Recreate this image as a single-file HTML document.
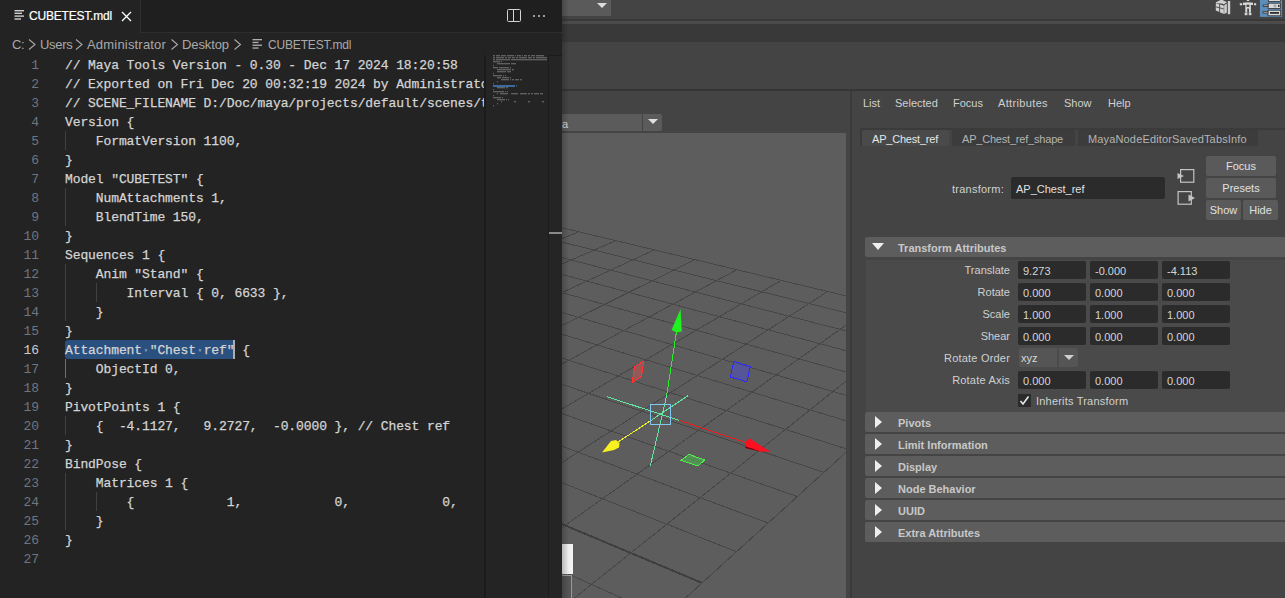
<!DOCTYPE html>
<html><head><meta charset="utf-8">
<style>
*{box-sizing:border-box}
html,body{margin:0;padding:0;width:1285px;height:598px;overflow:hidden;background:#444;font-family:"Liberation Sans",sans-serif}
.a{position:absolute}
/* ---------- VS Code ---------- */
#vs{position:absolute;left:0;top:0;width:562px;height:598px;background:#232323;overflow:hidden}
#tabs{position:absolute;left:0;top:0;width:562px;height:33px;background:#1f1f1f;border-bottom:1px solid #2e2e2e}
#tab{position:absolute;left:0;top:0;width:141px;height:33px;background:#232323;border-right:1px solid #2e2e2e}
.tabt{position:absolute;left:29px;top:9px;font-size:12px;color:#ffffff;white-space:nowrap;letter-spacing:-0.2px;-webkit-text-stroke:0.2px #fff}
.crumb{position:absolute;top:37px;font-size:13px;color:#a9a9a9;white-space:nowrap}
.ln{position:absolute;left:0;width:39px;text-align:right;font:13px "Liberation Mono",monospace;line-height:19px;color:#6e7681;letter-spacing:-0.1px}
.ln.act{color:#cccccc}
.cl{position:absolute;left:65px;font:13px "Liberation Mono",monospace;letter-spacing:-0.1px;line-height:19px;color:#d4d4d4;white-space:pre;-webkit-text-stroke:0.25px #d4d4d4}
.sel{background:#2a5080;display:inline-block;vertical-align:top;margin-top:-1px;padding-top:1px;box-sizing:content-box;height:18px;border-radius:3px 0 3px 3px}
.sel i{font-style:normal;color:#5b7a9a}
.cur{display:inline-block;width:2px;height:19px;background:#aeafad;vertical-align:top;margin-left:-1px;margin-right:-1px;margin-top:-1px}
.ig{position:absolute;width:1px;background:#404040}
#codeclip{position:absolute;left:0;top:33px;width:484px;height:565px;overflow:hidden}
#codeclip .cl,#codeclip .ln,#codeclip .ig{margin-top:-33px}
#mm{position:absolute;left:484px;top:33px;width:78px;height:565px;background:#232323}
.mmr{position:absolute;height:2px;background:linear-gradient(to bottom,#9c9c9c 50%,#4c4c4c 50%);opacity:.5}
/* ---------- Maya ---------- */
.mt{position:absolute;font-size:11px;color:#d0d0d0;white-space:nowrap}
.fld{position:absolute;background:#2b2b2b;border-radius:2px;height:18px}
.fld span{position:absolute;left:5px;top:3.5px;font-size:11px;color:#d5d5d5}
.hdr{position:absolute;left:865px;width:420px;height:20px;background:#5d5d5d;border-radius:2px 0 0 2px}
.hdr b{position:absolute;left:33px;top:5px;font-size:11px;font-weight:bold;color:#c8c8c8;white-space:nowrap}
.tri-r{position:absolute;left:10px;top:4px;width:0;height:0;border-top:6px solid transparent;border-bottom:6px solid transparent;border-left:7px solid #eeeeee}
.btn{position:absolute;background:#5a5a5a;border-radius:2px;color:#e0e0e0;font-size:11px;text-align:center;line-height:21px}
.lab{position:absolute;font-size:11px;color:#d0d0d0;text-align:right;white-space:nowrap}
</style></head><body>

<!-- ================= MAYA ================= -->
<div class="a" style="left:562px;top:0;width:723px;height:19px;background:#444"></div>
<div class="a" style="left:562px;top:0;width:49px;height:16px;background:#5a5a5a"></div>
<div class="a" style="left:597px;top:3px;width:0;height:0;border-left:5px solid transparent;border-right:5px solid transparent;border-top:5px solid #dddddd"></div>
<div class="a" style="left:562px;top:19px;width:723px;height:2px;background:#393939"></div>
<div class="a" style="left:562px;top:21px;width:723px;height:3px;background:#4b4b4b"></div>
<div class="a" style="left:562px;top:24px;width:723px;height:18px;background:#393939"></div>
<div class="a" style="left:562px;top:42px;width:723px;height:47px;background:#444"></div>
<div class="a" style="left:562px;top:89px;width:723px;height:2px;background:#363636"></div>

<!-- top-right icons -->
<svg class="a" style="left:1210px;top:0" width="75" height="19" viewBox="0 0 75 19" shape-rendering="geometricPrecision">
  <g fill="#d0d0d0">
    <polygon points="6,2.2 11.5,-0.5 17,2.2 14,4.2 11.5,3.6 6,3.2"/>
    <polygon points="5.8,3.2 13.8,5.4 13.8,14 5.8,10.5"/>
    <polygon points="14.2,5.2 16.8,3.6 16.8,12.8 14.2,14"/>
    <rect x="17.8" y="1" width="2.4" height="13.2"/>
  </g>
  <g stroke="#474747" stroke-width="0.9" fill="none">
    <line x1="9.6" y1="4" x2="9.6" y2="12.4"/>
    <line x1="5.8" y1="6.8" x2="13.8" y2="9"/>
  </g>
  <g fill="#d6d6d6">
    <rect x="36.8" y="0" width="2.4" height="1"/>
    <rect x="29.8" y="3.2" width="2.4" height="2.1"/><rect x="44" y="3.2" width="2.2" height="2.1"/>
    <rect x="33" y="2.6" width="10" height="2.4"/>
    <rect x="35.3" y="2.6" width="5.6" height="9.7"/>
    <rect x="34.7" y="12.5" width="2.7" height="2.7"/><rect x="38.8" y="12.5" width="2.6" height="2.7"/>
  </g>
  <rect x="36.5" y="4.7" width="2.9" height="2.3" fill="#4a4a4a"/>
  <rect x="37.2" y="8.6" width="1.8" height="3.7" fill="#4a4a4a"/>
  <rect x="49.9" y="0" width="22.2" height="16.9" fill="#5c8dbb"/>
  <g stroke="#2e2e2e" stroke-width="0.8" fill="#d8d8d8">
    <rect x="58.4" y="-1" width="12.2" height="2.5"/>
    <rect x="58.1" y="3.2" width="12.5" height="5.3"/>
    <rect x="58" y="10.2" width="12.7" height="5.6"/>
    <rect x="53.1" y="5" width="5" height="1.4"/>
    <rect x="52.9" y="11.7" width="5.1" height="1.4"/>
  </g>
  <rect x="60" y="12" width="9" height="1.8" fill="#2e2e2e"/>
  <circle cx="65" cy="5.9" r="1.6" fill="#a8a8a8"/>
  <rect x="68" y="4.9" width="1.6" height="2" fill="#2e2e2e"/>
</svg>

<!-- viewport panel -->
<div class="a" style="left:562px;top:91px;width:288px;height:42px;background:#444"></div>
<div class="a" style="left:562px;top:114px;width:80px;height:17px;background:#5b5b5b"></div>
<div class="mt" style="left:562px;top:118px;color:#d8d8d8;letter-spacing:-0.5px">a</div>
<div class="a" style="left:643px;top:114px;width:19px;height:17px;background:#5b5b5b;border-radius:0 2px 2px 0"></div>
<div class="a" style="left:648px;top:119px;width:0;height:0;border-left:5px solid transparent;border-right:5px solid transparent;border-top:5px solid #e0e0e0"></div>

<div class="a" style="left:562px;top:133px;width:284px;height:465px;background:#5d5d5d;overflow:hidden">
<svg width="284" height="465" style="position:absolute;left:0;top:0" shape-rendering="crispEdges">
<line x1="-391.1" y1="0.9" x2="420.4" y2="195.6" stroke="#474747" stroke-width="1"/><line x1="-415.1" y1="5.9" x2="404.8" y2="209.8" stroke="#474747" stroke-width="1"/><line x1="-440.0" y1="11.1" x2="388.2" y2="224.8" stroke="#474747" stroke-width="1"/><line x1="-465.9" y1="16.4" x2="370.5" y2="240.9" stroke="#474747" stroke-width="1"/><line x1="-492.7" y1="22.0" x2="351.7" y2="257.9" stroke="#474747" stroke-width="1"/><line x1="-520.6" y1="27.8" x2="331.6" y2="276.2" stroke="#474747" stroke-width="1"/><line x1="-549.6" y1="33.8" x2="310.0" y2="295.7" stroke="#474747" stroke-width="1"/><line x1="-579.8" y1="40.0" x2="286.9" y2="316.7" stroke="#474747" stroke-width="1"/><line x1="-611.2" y1="46.5" x2="262.0" y2="339.3" stroke="#474747" stroke-width="1"/><line x1="-643.9" y1="53.3" x2="235.2" y2="363.6" stroke="#474747" stroke-width="1"/><line x1="-678.1" y1="60.4" x2="206.1" y2="390.0" stroke="#474747" stroke-width="1"/><line x1="-713.7" y1="67.8" x2="174.5" y2="418.7" stroke="#474747" stroke-width="1"/><line x1="-751.0" y1="75.5" x2="140.0" y2="449.9" stroke="#3f3f3f" stroke-width="2"/><line x1="-790.0" y1="83.6" x2="102.3" y2="484.1" stroke="#474747" stroke-width="1"/><line x1="-830.8" y1="92.0" x2="60.9" y2="521.7" stroke="#474747" stroke-width="1"/><line x1="-873.6" y1="100.9" x2="15.2" y2="563.2" stroke="#474747" stroke-width="1"/><line x1="-918.5" y1="110.2" x2="-35.6" y2="609.3" stroke="#474747" stroke-width="1"/><line x1="-965.8" y1="120.0" x2="-92.3" y2="660.7" stroke="#474747" stroke-width="1"/><line x1="-1015.4" y1="130.3" x2="-156.0" y2="718.5" stroke="#474747" stroke-width="1"/><line x1="-1067.8" y1="141.1" x2="-228.1" y2="783.9" stroke="#474747" stroke-width="1"/><line x1="-1123.0" y1="152.6" x2="-310.3" y2="858.5" stroke="#474747" stroke-width="1"/><line x1="-1181.3" y1="164.6" x2="-405.1" y2="944.4" stroke="#474747" stroke-width="1"/><line x1="-1243.1" y1="177.4" x2="-515.3" y2="1044.5" stroke="#474747" stroke-width="1"/><line x1="-1308.5" y1="191.0" x2="-645.3" y2="1162.4" stroke="#474747" stroke-width="1"/><line x1="-1378.0" y1="205.4" x2="-800.8" y2="1303.4" stroke="#474747" stroke-width="1"/><line x1="-391.1" y1="0.9" x2="-1378.0" y2="205.4" stroke="#474747" stroke-width="1"/><line x1="-370.2" y1="5.9" x2="-1370.2" y2="220.2" stroke="#474747" stroke-width="1"/><line x1="-348.7" y1="11.1" x2="-1361.9" y2="236.0" stroke="#474747" stroke-width="1"/><line x1="-326.4" y1="16.5" x2="-1353.1" y2="252.7" stroke="#474747" stroke-width="1"/><line x1="-303.3" y1="22.0" x2="-1343.8" y2="270.5" stroke="#474747" stroke-width="1"/><line x1="-279.4" y1="27.7" x2="-1333.8" y2="289.4" stroke="#474747" stroke-width="1"/><line x1="-254.6" y1="33.7" x2="-1323.2" y2="309.7" stroke="#474747" stroke-width="1"/><line x1="-228.9" y1="39.9" x2="-1311.7" y2="331.5" stroke="#474747" stroke-width="1"/><line x1="-202.2" y1="46.3" x2="-1299.5" y2="354.8" stroke="#474747" stroke-width="1"/><line x1="-174.5" y1="52.9" x2="-1286.3" y2="379.9" stroke="#474747" stroke-width="1"/><line x1="-145.7" y1="59.8" x2="-1272.0" y2="407.1" stroke="#474747" stroke-width="1"/><line x1="-115.8" y1="67.0" x2="-1256.5" y2="436.5" stroke="#474747" stroke-width="1"/><line x1="-84.6" y1="74.5" x2="-1239.8" y2="468.4" stroke="#3f3f3f" stroke-width="2"/><line x1="-52.2" y1="82.2" x2="-1221.4" y2="503.3" stroke="#474747" stroke-width="1"/><line x1="-18.4" y1="90.4" x2="-1201.4" y2="541.4" stroke="#474747" stroke-width="1"/><line x1="16.9" y1="98.8" x2="-1179.3" y2="583.4" stroke="#474747" stroke-width="1"/><line x1="53.8" y1="107.7" x2="-1154.9" y2="629.8" stroke="#474747" stroke-width="1"/><line x1="92.3" y1="116.9" x2="-1127.8" y2="681.3" stroke="#474747" stroke-width="1"/><line x1="132.7" y1="126.6" x2="-1097.6" y2="738.9" stroke="#474747" stroke-width="1"/><line x1="174.9" y1="136.7" x2="-1063.6" y2="803.6" stroke="#474747" stroke-width="1"/><line x1="219.2" y1="147.4" x2="-1025.0" y2="877.0" stroke="#474747" stroke-width="1"/><line x1="265.7" y1="158.5" x2="-980.9" y2="960.8" stroke="#474747" stroke-width="1"/><line x1="314.7" y1="170.3" x2="-930.1" y2="1057.5" stroke="#474747" stroke-width="1"/><line x1="366.1" y1="182.6" x2="-870.8" y2="1170.3" stroke="#474747" stroke-width="1"/><line x1="420.4" y1="195.6" x2="-800.8" y2="1303.4" stroke="#474747" stroke-width="1"/>
<!-- manipulator (coords relative: subtract 562,133) -->
<g transform="translate(-562,-133)">
  <polygon points="643.8,361 634.4,366.8 632.3,382.4 641.4,376.4" fill="rgba(200,80,80,.55)" stroke="#ff3434" stroke-width="1"/>
  <polygon points="733.9,361.4 750.3,366.5 746.9,381.7 730.2,377.1" fill="rgba(80,80,190,.6)" stroke="#2c2cff" stroke-width="1"/>
  <polygon points="689,454.4 704.5,460 698.1,466 681,460.4" fill="rgba(80,190,80,.55)" stroke="#48f048" stroke-width="1"/>
  <line x1="606.9" y1="396.6" x2="679" y2="420.3" stroke="#60e8a0" stroke-width="1"/>
  <line x1="679" y1="420.3" x2="747" y2="443" stroke="#f01818" stroke-width="1"/>
  <polygon shape-rendering="geometricPrecision" points="746.3,440.8 749.8,438.6 770.8,452 760,451.4 745.3,448" fill="#fa1020"/><polygon shape-rendering="geometricPrecision" points="745.3,446.6 752,448.6 760,451.4 745.3,448" fill="#6a0008"/>
  <line x1="688.3" y1="395.5" x2="650.5" y2="420.8" stroke="#60e8a0" stroke-width="1"/>
  <line x1="650.5" y1="420.8" x2="618" y2="442" stroke="#f0f020" stroke-width="1"/>
  <polygon shape-rendering="geometricPrecision" points="602,452.5 611,441 616,440 619.5,443 619,447.5 614,450" fill="#f8f020"/>
  <line x1="676.4" y1="332" x2="666.7" y2="395.5" stroke="#28f028" stroke-width="1"/>
  <line x1="666.7" y1="395.5" x2="650.2" y2="466.3" stroke="#60e8a0" stroke-width="1"/>
  <polygon shape-rendering="geometricPrecision" points="680.6,309.1 671.5,330.1 676.6,332.5 681.8,331.4" fill="#20f020"/>
  <rect x="650.5" y="404.5" width="20" height="20" fill="none" stroke="#80c8f0" stroke-width="1.5"/>
</g>
</svg>
</div>
<div class="a" style="left:562px;top:544px;width:11px;height:30px;background:linear-gradient(to right,#e8e8e8,#f4f4f4)"></div>
<div class="a" style="left:562px;top:575px;width:10px;height:23px;border-right:1px solid #999;border-top:1px solid #999;background:#555"></div>

<div class="a" style="left:846px;top:91px;width:4px;height:507px;background:#444"></div>
<div class="a" style="left:850px;top:91px;width:2px;height:507px;background:#3a3a3a"></div>

<!-- attribute editor -->
<div class="mt" style="left:863px;top:97px">List</div>
<div class="mt" style="left:895px;top:97px">Selected</div>
<div class="mt" style="left:953px;top:97px">Focus</div>
<div class="mt" style="left:998px;top:97px;letter-spacing:0.35px">Attributes</div>
<div class="mt" style="left:1064px;top:97px">Show</div>
<div class="mt" style="left:1108px;top:97px">Help</div>

<div class="a" style="left:860px;top:128px;width:425px;height:2px;background:#3b3b3b"></div>
<div class="a" style="left:860px;top:130px;width:2px;height:16px;background:#3b3b3b"></div>
<div class="a" style="left:862px;top:130px;width:87px;height:16px;background:#4a4a4a;border-radius:2px 2px 0 0"></div>
<div class="mt" style="left:872px;top:133px;color:#e6e6e6;letter-spacing:-0.2px">AP_Chest_ref</div>
<div class="a" style="left:952px;top:130px;width:123px;height:16px;background:#3c3c3c;border-radius:2px 2px 0 0"></div>
<div class="mt" style="left:962px;top:133px;color:#b4b4b4;letter-spacing:-0.2px">AP_Chest_ref_shape</div>
<div class="a" style="left:1078px;top:130px;width:180px;height:16px;background:#3c3c3c;border-radius:2px 2px 0 0"></div>
<div class="mt" style="left:1088px;top:133px;color:#b4b4b4;letter-spacing:0.15px">MayaNodeEditorSavedTabsInfo</div>

<div class="lab" style="left:900px;width:104px;top:183px;letter-spacing:0.25px">transform:</div>
<div class="fld" style="left:1011px;top:177px;width:154px;height:22px"><span style="top:6px;color:#e0e0e0">AP_Chest_ref</span></div>

<svg class="a" style="left:1176px;top:168px" width="20" height="38">
 <g fill="none" stroke="#c4c4c4" stroke-width="1.2"><rect x="4.6" y="1.6" width="13.2" height="12.6"/><rect x="2.1" y="23.6" width="13.2" height="12.6"/></g>
 <polygon points="1.5,5 8,8 1.5,11" fill="#c4c4c4"/>
 <polygon points="12.5,26.5 19,30 12.5,33.5" fill="#c4c4c4"/>
</svg>
<div class="btn" style="left:1206px;top:156px;width:70px;height:20px">Focus</div>
<div class="btn" style="left:1206px;top:178px;width:70px;height:20px">Presets</div>
<div class="btn" style="left:1206px;top:200px;width:35px;height:20px">Show</div>
<div class="btn" style="left:1243px;top:200px;width:35px;height:20px">Hide</div>

<div class="hdr" style="top:237px"><div class="a" style="left:7px;top:6px;width:0;height:0;border-left:6px solid transparent;border-right:6px solid transparent;border-top:7px solid #eeeeee"></div><b>Transform Attributes</b></div>
<div class="a" style="left:866px;top:260px;width:419px;height:152px;background:#4a4a4a"></div>

<div class="lab" style="left:900px;width:110px;top:264px">Translate</div>
<div class="fld" style="left:1018px;top:261px;width:68px"><span>9.273</span></div>
<div class="fld" style="left:1090px;top:261px;width:68px"><span>-0.000</span></div>
<div class="fld" style="left:1162px;top:261px;width:68px"><span>-4.113</span></div>

<div class="lab" style="left:900px;width:110px;top:286px">Rotate</div>
<div class="fld" style="left:1018px;top:283px;width:68px"><span>0.000</span></div>
<div class="fld" style="left:1090px;top:283px;width:68px"><span>0.000</span></div>
<div class="fld" style="left:1162px;top:283px;width:68px"><span>0.000</span></div>

<div class="lab" style="left:900px;width:110px;top:308px">Scale</div>
<div class="fld" style="left:1018px;top:305px;width:68px"><span>1.000</span></div>
<div class="fld" style="left:1090px;top:305px;width:68px"><span>1.000</span></div>
<div class="fld" style="left:1162px;top:305px;width:68px"><span>1.000</span></div>

<div class="lab" style="left:900px;width:110px;top:330px">Shear</div>
<div class="fld" style="left:1018px;top:327px;width:68px"><span>0.000</span></div>
<div class="fld" style="left:1090px;top:327px;width:68px"><span>0.000</span></div>
<div class="fld" style="left:1162px;top:327px;width:68px"><span>0.000</span></div>

<div class="lab" style="left:900px;width:110px;top:352px;letter-spacing:0.2px">Rotate Order</div>
<div class="a" style="left:1019px;top:348px;width:38px;height:19px;background:#555;border-radius:2px 0 0 2px"></div>
<div class="mt" style="left:1021px;top:352px;color:#d8d8d8">xyz</div>
<div class="a" style="left:1059px;top:348px;width:19px;height:19px;background:#555;border-radius:0 2px 2px 0"></div>
<div class="a" style="left:1064px;top:355px;width:0;height:0;border-left:5px solid transparent;border-right:5px solid transparent;border-top:5px solid #cfcfcf"></div>

<div class="lab" style="left:900px;width:110px;top:374px;letter-spacing:0.2px">Rotate Axis</div>
<div class="fld" style="left:1018px;top:371px;width:68px"><span>0.000</span></div>
<div class="fld" style="left:1090px;top:371px;width:68px"><span>0.000</span></div>
<div class="fld" style="left:1162px;top:371px;width:68px"><span>0.000</span></div>

<div class="a" style="left:1018px;top:394px;width:13px;height:13px;background:#2b2b2b;border-radius:1px"></div>
<svg class="a" style="left:1018px;top:394px" width="13" height="13"><polyline points="2.5,7 5,10 10.5,2.5" fill="none" stroke="#e8e8e8" stroke-width="1.6"/></svg>
<div class="mt" style="left:1036px;top:395px;letter-spacing:0.2px">Inherits Transform</div>

<div class="hdr" style="top:412px"><div class="tri-r"></div><b>Pivots</b></div>
<div class="hdr" style="top:434px"><div class="tri-r"></div><b>Limit Information</b></div>
<div class="hdr" style="top:456px"><div class="tri-r"></div><b>Display</b></div>
<div class="hdr" style="top:478px"><div class="tri-r"></div><b>Node Behavior</b></div>
<div class="hdr" style="top:500px"><div class="tri-r"></div><b>UUID</b></div>
<div class="hdr" style="top:522px"><div class="tri-r"></div><b>Extra Attributes</b></div>

<div class="a" style="left:562px;top:0;width:7px;height:598px;background:linear-gradient(to right,rgba(0,0,0,.2),rgba(0,0,0,0))"></div>
<!-- ================= VS CODE ================= -->
<div id="vs">
  <div id="tabs"></div>
  <div id="tab">
    <svg class="a" style="left:14px;top:9px" width="11" height="12"><g fill="#d0d0d0"><rect x="0.5" y="1" width="9.5" height="1.4"/><rect x="0.5" y="3.6" width="7.5" height="1.4"/><rect x="0.5" y="6.4" width="9.5" height="1.4"/><rect x="0.5" y="9.3" width="6.5" height="1.4"/></g></svg>
    <div class="tabt">CUBETEST.mdl</div>
    <svg class="a" style="left:121px;top:11px" width="11" height="11"><path d="M1 1 L10 10 M10 1 L1 10" stroke="#ffffff" stroke-width="1.3"/></svg>
  </div>
  <svg class="a" style="left:507px;top:9px" width="14" height="14"><g fill="none" stroke="#d4d4d4" stroke-width="1"><rect x="0.5" y="0.5" width="13" height="12" rx="1"/><line x1="6.5" y1="0.5" x2="6.5" y2="12.5"/></g></svg>
  <svg class="a" style="left:532px;top:14px" width="14" height="4"><g fill="#d0d0d0"><circle cx="2" cy="2" r="0.95"/><circle cx="7" cy="2" r="0.95"/><circle cx="12" cy="2" r="0.95"/></g></svg>

  <div class="crumb" style="left:12px;letter-spacing:-0.4px">C:</div>
  <div class="crumb" style="left:40px;letter-spacing:-0.3px">Users</div>
  <div class="crumb" style="left:87px;letter-spacing:0.19px">Administrator</div>
  <div class="crumb" style="left:182px;letter-spacing:-0.11px">Desktop</div>
  <svg class="a" style="left:0;top:38px" width="250" height="14"><g fill="none" stroke="#a9a9a9" stroke-width="1.1"><path d="M29 1.5 L35 6.5 L29 11.5"/><path d="M76 1.5 L82 6.5 L76 11.5"/><path d="M171.5 1.5 L177.5 6.5 L171.5 11.5"/><path d="M234.5 1.5 L240.5 6.5 L234.5 11.5"/></g></svg>
  <svg class="a" style="left:252px;top:39px" width="11" height="11"><g fill="#b0b0b0"><rect x="0.5" y="0" width="9.5" height="1.3"/><rect x="0.5" y="2.8" width="6" height="1.3"/><rect x="0.5" y="5.6" width="9.5" height="1.3"/><rect x="0.5" y="8.4" width="6" height="1.3"/></g></svg>
  <div class="crumb" style="left:268px;font-size:12px;top:38px;letter-spacing:-0.17px">CUBETEST.mdl</div>

  <div id="codeclip">
  <div class="ig" style="left:65.0px;top:131px;height:19px"></div><div class="ig" style="left:65.0px;top:188px;height:38px"></div><div class="ig" style="left:65.0px;top:264px;height:57px"></div><div class="ig" style="left:95.8px;top:283px;height:19px"></div><div class="ig" style="left:65.0px;top:359px;height:19px;background:#707070"></div><div class="ig" style="left:65.0px;top:416px;height:19px"></div><div class="ig" style="left:65.0px;top:473px;height:57px"></div><div class="ig" style="left:95.8px;top:492px;height:19px"></div>
  <div class="ln" style="top:56px">1</div><div class="ln" style="top:75px">2</div><div class="ln" style="top:94px">3</div><div class="ln" style="top:113px">4</div><div class="ln" style="top:132px">5</div><div class="ln" style="top:151px">6</div><div class="ln" style="top:170px">7</div><div class="ln" style="top:189px">8</div><div class="ln" style="top:208px">9</div><div class="ln" style="top:227px">10</div><div class="ln" style="top:246px">11</div><div class="ln" style="top:265px">12</div><div class="ln" style="top:284px">13</div><div class="ln" style="top:303px">14</div><div class="ln" style="top:322px">15</div><div class="ln act" style="top:341px">16</div><div class="ln" style="top:360px">17</div><div class="ln" style="top:379px">18</div><div class="ln" style="top:398px">19</div><div class="ln" style="top:417px">20</div><div class="ln" style="top:436px">21</div><div class="ln" style="top:455px">22</div><div class="ln" style="top:474px">23</div><div class="ln" style="top:493px">24</div><div class="ln" style="top:512px">25</div><div class="ln" style="top:531px">26</div><div class="ln" style="top:550px">27</div>
  <div class="cl" style="top:56px">//&nbsp;Maya&nbsp;Tools&nbsp;Version&nbsp;-&nbsp;0.30&nbsp;-&nbsp;Dec&nbsp;17&nbsp;2024&nbsp;18:20:58</div><div class="cl" style="top:75px">//&nbsp;Exported&nbsp;on&nbsp;Fri&nbsp;Dec&nbsp;20&nbsp;00:32:19&nbsp;2024&nbsp;by&nbsp;Administrator</div><div class="cl" style="top:94px">//&nbsp;SCENE_FILENAME&nbsp;D:/Doc/maya/projects/default/scenes/test.mb</div><div class="cl" style="top:113px">Version&nbsp;{</div><div class="cl" style="top:132px">&nbsp;&nbsp;&nbsp;&nbsp;FormatVersion&nbsp;1100,</div><div class="cl" style="top:151px">}</div><div class="cl" style="top:170px">Model&nbsp;&quot;CUBETEST&quot;&nbsp;{</div><div class="cl" style="top:189px">&nbsp;&nbsp;&nbsp;&nbsp;NumAttachments&nbsp;1,</div><div class="cl" style="top:208px">&nbsp;&nbsp;&nbsp;&nbsp;BlendTime&nbsp;150,</div><div class="cl" style="top:227px">}</div><div class="cl" style="top:246px">Sequences&nbsp;1&nbsp;{</div><div class="cl" style="top:265px">&nbsp;&nbsp;&nbsp;&nbsp;Anim&nbsp;&quot;Stand&quot;&nbsp;{</div><div class="cl" style="top:284px">&nbsp;&nbsp;&nbsp;&nbsp;&nbsp;&nbsp;&nbsp;&nbsp;Interval&nbsp;{&nbsp;0,&nbsp;6633&nbsp;},</div><div class="cl" style="top:303px">&nbsp;&nbsp;&nbsp;&nbsp;}</div><div class="cl" style="top:322px">}</div><div class="cl" style="top:341px"><span class="sel">Attachment<i>·</i>"Chest<i>·</i>ref"</span><span class="cur"></span> {</div><div class="cl" style="top:360px">&nbsp;&nbsp;&nbsp;&nbsp;ObjectId&nbsp;0,</div><div class="cl" style="top:379px">}</div><div class="cl" style="top:398px">PivotPoints&nbsp;1&nbsp;{</div><div class="cl" style="top:417px">&nbsp;&nbsp;&nbsp;&nbsp;{&nbsp;&nbsp;-4.1127,&nbsp;&nbsp;&nbsp;9.2727,&nbsp;&nbsp;-0.0000&nbsp;},&nbsp;//&nbsp;Chest&nbsp;ref</div><div class="cl" style="top:436px">}</div><div class="cl" style="top:455px">BindPose&nbsp;{</div><div class="cl" style="top:474px">&nbsp;&nbsp;&nbsp;&nbsp;Matrices&nbsp;1&nbsp;{</div><div class="cl" style="top:493px">&nbsp;&nbsp;&nbsp;&nbsp;&nbsp;&nbsp;&nbsp;&nbsp;{&nbsp;&nbsp;&nbsp;&nbsp;&nbsp;&nbsp;&nbsp;&nbsp;&nbsp;&nbsp;&nbsp;&nbsp;1,&nbsp;&nbsp;&nbsp;&nbsp;&nbsp;&nbsp;&nbsp;&nbsp;&nbsp;&nbsp;&nbsp;&nbsp;0,&nbsp;&nbsp;&nbsp;&nbsp;&nbsp;&nbsp;&nbsp;&nbsp;&nbsp;&nbsp;&nbsp;&nbsp;0,&nbsp;&nbsp;&nbsp;&nbsp;&nbsp;&nbsp;&nbsp;&nbsp;&nbsp;&nbsp;&nbsp;&nbsp;0,</div><div class="cl" style="top:512px">&nbsp;&nbsp;&nbsp;&nbsp;}</div><div class="cl" style="top:531px">}</div><div class="cl" style="top:550px"></div>
  </div>
  <div id="mm">
    <div class="a" style="left:0;top:22px;width:2px;height:543px;background:#1b1b1b"></div>
    <div class="a" style="left:64px;top:22px;width:1px;height:543px;background:#1d1d1d"></div>
    <div class="a" style="left:2px;top:22px;width:62px;height:543px;background:#242424"></div>
    <div class="a" style="left:65px;top:22px;width:13px;height:543px;background:#252525"></div>
  </div>
  <div class="mmr" style="left:493px;top:55px;width:2px"></div><div class="mmr" style="left:496px;top:55px;width:4px"></div><div class="mmr" style="left:501px;top:55px;width:5px"></div><div class="mmr" style="left:507px;top:55px;width:7px"></div><div class="mmr" style="left:515px;top:55px;width:1px"></div><div class="mmr" style="left:517px;top:55px;width:4px"></div><div class="mmr" style="left:522px;top:55px;width:1px"></div><div class="mmr" style="left:524px;top:55px;width:3px"></div><div class="mmr" style="left:528px;top:55px;width:2px"></div><div class="mmr" style="left:531px;top:55px;width:4px"></div><div class="mmr" style="left:536px;top:55px;width:8px"></div><div class="mmr" style="left:493px;top:57px;width:2px"></div><div class="mmr" style="left:496px;top:57px;width:8px"></div><div class="mmr" style="left:505px;top:57px;width:2px"></div><div class="mmr" style="left:508px;top:57px;width:3px"></div><div class="mmr" style="left:512px;top:57px;width:3px"></div><div class="mmr" style="left:516px;top:57px;width:2px"></div><div class="mmr" style="left:519px;top:57px;width:8px"></div><div class="mmr" style="left:528px;top:57px;width:4px"></div><div class="mmr" style="left:533px;top:57px;width:2px"></div><div class="mmr" style="left:536px;top:57px;width:11px"></div><div class="mmr" style="left:493px;top:59px;width:2px"></div><div class="mmr" style="left:496px;top:59px;width:14px"></div><div class="mmr" style="left:511px;top:59px;width:36px"></div><div class="mmr" style="left:493px;top:61px;width:7px"></div><div class="mmr" style="left:501px;top:61px;width:1px"></div><div class="mmr" style="left:497px;top:63px;width:13px"></div><div class="mmr" style="left:511px;top:63px;width:5px"></div><div class="mmr" style="left:493px;top:65px;width:1px"></div><div class="mmr" style="left:493px;top:67px;width:5px"></div><div class="mmr" style="left:499px;top:67px;width:10px"></div><div class="mmr" style="left:510px;top:67px;width:1px"></div><div class="mmr" style="left:497px;top:69px;width:14px"></div><div class="mmr" style="left:512px;top:69px;width:2px"></div><div class="mmr" style="left:497px;top:71px;width:9px"></div><div class="mmr" style="left:507px;top:71px;width:4px"></div><div class="mmr" style="left:493px;top:73px;width:1px"></div><div class="mmr" style="left:493px;top:75px;width:9px"></div><div class="mmr" style="left:503px;top:75px;width:1px"></div><div class="mmr" style="left:505px;top:75px;width:1px"></div><div class="mmr" style="left:497px;top:77px;width:4px"></div><div class="mmr" style="left:502px;top:77px;width:7px"></div><div class="mmr" style="left:510px;top:77px;width:1px"></div><div class="mmr" style="left:501px;top:79px;width:8px"></div><div class="mmr" style="left:510px;top:79px;width:1px"></div><div class="mmr" style="left:512px;top:79px;width:2px"></div><div class="mmr" style="left:515px;top:79px;width:4px"></div><div class="mmr" style="left:520px;top:79px;width:2px"></div><div class="mmr" style="left:497px;top:81px;width:1px"></div><div class="mmr" style="left:493px;top:83px;width:1px"></div><div class="a" style="left:493px;top:85px;width:22px;height:2px;background:#3a6a9e"></div><div class="mmr" style="left:516px;top:85px;width:1px"></div><div class="mmr" style="left:497px;top:87px;width:8px"></div><div class="mmr" style="left:506px;top:87px;width:2px"></div><div class="mmr" style="left:493px;top:89px;width:1px"></div><div class="mmr" style="left:493px;top:91px;width:11px"></div><div class="mmr" style="left:505px;top:91px;width:1px"></div><div class="mmr" style="left:507px;top:91px;width:1px"></div><div class="mmr" style="left:497px;top:93px;width:1px"></div><div class="mmr" style="left:500px;top:93px;width:8px"></div><div class="mmr" style="left:511px;top:93px;width:7px"></div><div class="mmr" style="left:520px;top:93px;width:7px"></div><div class="mmr" style="left:528px;top:93px;width:2px"></div><div class="mmr" style="left:531px;top:93px;width:2px"></div><div class="mmr" style="left:534px;top:93px;width:5px"></div><div class="mmr" style="left:540px;top:93px;width:3px"></div><div class="mmr" style="left:493px;top:95px;width:1px"></div><div class="mmr" style="left:493px;top:97px;width:8px"></div><div class="mmr" style="left:502px;top:97px;width:1px"></div><div class="mmr" style="left:497px;top:99px;width:8px"></div><div class="mmr" style="left:506px;top:99px;width:1px"></div><div class="mmr" style="left:508px;top:99px;width:1px"></div><div class="mmr" style="left:501px;top:101px;width:1px"></div><div class="mmr" style="left:514px;top:101px;width:2px"></div><div class="mmr" style="left:528px;top:101px;width:2px"></div><div class="mmr" style="left:542px;top:101px;width:2px"></div><div class="mmr" style="left:497px;top:103px;width:1px"></div><div class="mmr" style="left:493px;top:105px;width:1px"></div>
  <div class="a" style="left:549px;top:232px;width:13px;height:2px;background:#8a8a8a"></div>
  <div class="a" style="left:548px;top:55px;width:14px;height:1px;background:#1b1b1b"></div>
</div>
</body></html>
